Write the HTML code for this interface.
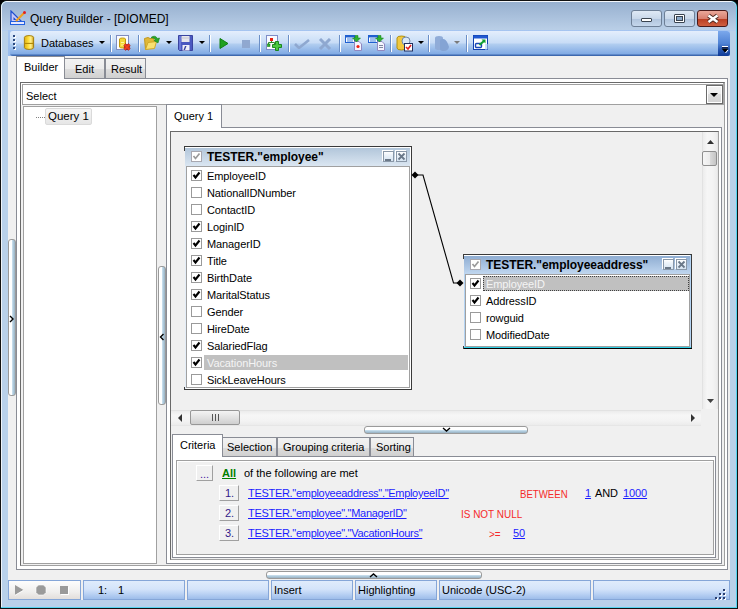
<!DOCTYPE html>
<html><head><meta charset="utf-8">
<style>
*{margin:0;padding:0;box-sizing:border-box}
html,body{width:738px;height:609px;overflow:hidden;background:#000}
body{position:relative;font-family:"Liberation Sans",sans-serif;font-size:11px;color:#000}
.a{position:absolute}
.t{position:absolute;white-space:nowrap;line-height:1}
.sep{position:absolute;top:35px;width:2px;height:17px;border-left:1px solid #6b8fc7;border-right:1px solid #fff}
.dd{position:absolute;top:42px;width:0;height:0;border-left:3px solid transparent;border-right:3px solid transparent;border-top:3px solid #000}
.cb{position:absolute;width:11px;height:11px;border:1px solid #9a9a9a;background:#fff}
.cb svg{position:absolute;left:0;top:0}
.fl{position:absolute;white-space:nowrap;line-height:1;font-size:11px;letter-spacing:-0.1px}
.lk{color:#1c1cff;text-decoration:underline}
.rd{color:#f52a2a}
.btn{position:absolute;border:1px solid #a0a0a0;background:linear-gradient(#f6f6f6,#e2e2e2);border-radius:2px}
</style></head><body>
<!-- window frame -->
<div class="a" style="left:0;top:0;width:738px;height:609px;background:#111;border-radius:7px 7px 0 0"></div>
<div class="a" style="left:1px;top:1px;width:736px;height:607px;background:#56d4f0;border-radius:6px 6px 0 0"></div>
<div class="a" style="left:1px;top:1px;width:735px;height:606px;background:#b9d1ea;border-radius:6px 6px 0 0;border-top:1px solid #f4f7fb;border-left:1px solid #eef3f8"></div>
<div class="a" style="left:2px;top:2px;width:734px;height:29px;background:linear-gradient(#97b0cf,#bbd0e8);border-radius:5px 5px 0 0"></div>
<div class="a" style="left:2px;top:30px;width:734px;height:1px;background:#b3cdef"></div>
<!-- title -->
<svg class="a" style="left:10px;top:10px" width="18" height="16" viewBox="0 0 18 16">
<path d="M1 1 L1 12 L12 12 Z" fill="#c8c8f8" stroke="#2050d0" stroke-width="1.2"/>
<path d="M3.5 7 L3.5 10 L6.5 10 Z" fill="#2050d0"/>
<rect x="0.5" y="11.5" width="14" height="3" fill="#e8e8ff" stroke="#2060e0"/>
<path d="M6 11 L14 3" stroke="#f0a020" stroke-width="2.2"/>
<circle cx="14.5" cy="2.5" r="1.5" fill="#e02020"/>
</svg>
<div class="t" style="left:30px;top:13px;font-size:12px;color:#000">Query Builder - [DIOMED]</div>
<!-- caption buttons -->
<div class="a" style="left:631px;top:10px;width:31px;height:17px;border:1px solid #6d7f96;border-radius:3px;background:linear-gradient(#dfe9f5 0,#c9d8ea 50%,#afc3dc 51%,#c5d7ec 100%)"></div>
<div class="a" style="left:641px;top:18px;width:11px;height:4px;border:1px solid #3a4450;background:#fff;border-radius:1px"></div>
<div class="a" style="left:664px;top:10px;width:31px;height:17px;border:1px solid #6d7f96;border-radius:3px;background:linear-gradient(#dfe9f5 0,#c9d8ea 50%,#afc3dc 51%,#c5d7ec 100%)"></div>
<div class="a" style="left:674px;top:14px;width:11px;height:9px;border:1px solid #3a4450;background:#fff;border-radius:1px"></div>
<div class="a" style="left:676px;top:16px;width:7px;height:5px;border:1px solid #3a4450;background:#8aa8c8"></div>
<div class="a" style="left:697px;top:10px;width:31px;height:17px;border:1px solid #4a1a1a;border-radius:3px;background:linear-gradient(#eaa89a 0,#d88070 50%,#b83c20 51%,#d06040 100%)"></div>
<svg class="a" style="left:705px;top:12px" width="16" height="13" viewBox="0 0 16 13"><path d="M3.5 3.5 L12.5 10 M12.5 3.5 L3.5 10" stroke="#4a2820" stroke-width="4.4"/><path d="M3.5 3.5 L12.5 10 M12.5 3.5 L3.5 10" stroke="#fff" stroke-width="2.6"/></svg>
<!-- content bg -->
<div class="a" style="left:8px;top:56px;width:722px;height:544px;background:#f0f0f0"></div>
<!-- toolbar -->
<div class="a" style="left:8px;top:30px;width:722px;height:26px;background:linear-gradient(#a6c5f0,#98bbec)"></div>
<div class="a" style="left:10px;top:31px;width:720px;height:25px;border-radius:3px;background:linear-gradient(#e4eefc 0px,#d3e4f9 7px,#c8dcf6 12px,#b2cef0 13px,#80aae4 23px,#3d68ae 24px)"></div>
<div class="a" style="left:718px;top:31px;width:12px;height:25px;border-radius:0 3px 3px 0;background:linear-gradient(#7ba8ec,#4f82d4 50%,#2656b0 75%,#0e3a96)"></div>
<div class="a" style="left:722px;top:46px;width:6px;height:1px;background:#fff;box-shadow:0 1px 0 #102050"></div>
<svg class="a" style="left:721px;top:48px" width="8" height="6" viewBox="0 0 8 6"><path d="M0.5 0.5 L7.5 0.5 L4 4.5 Z" fill="#000"/><path d="M7 2 L4.5 5" stroke="#fff" stroke-width="1"/></svg>
<!-- grip -->
<div class="a" style="left:13px;top:35px;width:2px;height:2px;background:#2c4a80;box-shadow:1px 1px 0 #fff,0 4px 0 #2c4a80,1px 5px 0 #fff,0 8px 0 #2c4a80,1px 9px 0 #fff,0 12px 0 #2c4a80,1px 13px 0 #fff"></div>
<!-- db icon -->
<svg class="a" style="left:23px;top:34px" width="12" height="17" viewBox="-0.5 0 13 17">
<defs><linearGradient id="gy" x1="0" x2="1"><stop offset="0" stop-color="#e0b010"/><stop offset=".45" stop-color="#ffe040"/><stop offset=".7" stop-color="#fff090"/><stop offset="1" stop-color="#d0a010"/></linearGradient></defs>
<path d="M1 3 Q1 1 6 1 Q11 1 11 3 L11 14 Q11 16 6 16 Q1 16 1 14 Z" fill="url(#gy)" stroke="#a07808"/>
<path d="M1.5 9.5 L10.5 9.5" stroke="#b08808" stroke-width="1.2" fill="none"/>
</svg>
<div class="t" style="left:41px;top:38px;font-size:11px">Databases</div>
<div class="dd" style="left:99px;top:41px"></div>
<div class="sep" style="left:110px"></div>
<!-- icon db del -->
<svg class="a" style="left:115px;top:34px" width="17" height="17" viewBox="0 0 17 17">
<rect x="1.5" y="1.5" width="12" height="14" fill="#fbfcff" stroke="#7f8cc0"/>
<path d="M4.5 5 Q4.5 4 7.5 4 Q10.5 4 10.5 5 L10.5 13 Q10.5 14 7.5 14 Q4.5 14 4.5 13 Z" fill="#f4d838" stroke="#c09a10"/>
<path d="M6 8.5 L9 8.5 M6 11 L9 11" stroke="#fff6a0"/>
<path d="M9.5 10.5 L14.5 15.5 M14.5 10.5 L9.5 15.5" stroke="#a01010" stroke-width="3.2"/>
<path d="M9.5 10.5 L14.5 15.5 M14.5 10.5 L9.5 15.5" stroke="#f04020" stroke-width="1.8"/>
</svg>
<div class="sep" style="left:138px"></div>
<!-- folder -->
<svg class="a" style="left:144px;top:35px" width="17" height="16" viewBox="0 0 17 16">
<path d="M0.5 3.5 L4 2.5 L6 3.5 L10 3.5 L10 12 L1.5 14.5 Z" fill="#e0b838" stroke="#c09820"/>
<path d="M1.5 14.5 L4 7.5 L12.5 6.5 L10.5 13.5 Z" fill="#f8e070" stroke="#d0a828"/>
<path d="M7 2.5 Q11 -0.5 13.5 3.5 L15.5 3 L14 8 L10 5.5 L12 5 Q10 2.5 7 2.5 Z" fill="#28a828" stroke="#188018" stroke-width=".6"/>
</svg>
<div class="dd" style="left:166px;top:41px"></div>
<!-- save -->
<svg class="a" style="left:178px;top:35px" width="15" height="16" viewBox="0 0 15 16">
<path d="M0.5 0.5 L14.5 0.5 L14.5 15.5 L1.5 15.5 L0.5 14.5 Z" fill="#4a58c0" stroke="#3a44a0"/>
<rect x="1" y="1" width="2" height="14" fill="#6a78d8"/>
<rect x="3.5" y="1" width="8" height="6" fill="#e6e6ec"/>
<rect x="3.5" y="2.5" width="8" height="1" fill="#c4c4d0"/>
<rect x="4.5" y="10" width="7" height="5.5" fill="#f0f0f8"/>
<path d="M5.5 15 L7 11 L8.5 11 L7 15 Z" fill="#3a44a0"/>
</svg>
<div class="dd" style="left:199px;top:41px"></div>
<div class="sep" style="left:209px"></div>
<!-- play stop -->
<svg class="a" style="left:219px;top:38px" width="10" height="11" viewBox="0 0 10 11"><path d="M1 0.5 L9 5.5 L1 10.5 Z" fill="#20a020" stroke="#108010"/></svg>
<div class="a" style="left:242px;top:40px;width:8px;height:8px;background:#90a8d0"></div>
<div class="sep" style="left:259px"></div>
<!-- add table -->
<svg class="a" style="left:265px;top:34px" width="18" height="18" viewBox="0 0 18 18">
<rect x="1.5" y="1.5" width="11" height="14" fill="#f8faff" stroke="#7e8cc8"/>
<rect x="5" y="4" width="3" height="3" fill="#e82010"/>
<path d="M6.5 7 L6.5 8.5 M3.5 8.5 L9.5 8.5 M3.5 8.5 L3.5 10 M9.5 8.5 L9.5 10" stroke="#188018" stroke-width=".9"/>
<rect x="2.5" y="10" width="2.5" height="2.5" fill="#30b030" stroke="#188018" stroke-width=".6"/>
<path transform="translate(1 0)" d="M9.5 7.5 L12.5 7.5 L12.5 10.5 L15.5 10.5 L15.5 13.5 L12.5 13.5 L12.5 16.5 L9.5 16.5 L9.5 13.5 L6.5 13.5 L6.5 10.5 L9.5 10.5 Z" fill="#4cc840" stroke="#108010" stroke-width=".9"/>
</svg>
<div class="sep" style="left:288px"></div>
<svg class="a" style="left:294px;top:39px" width="16" height="10" viewBox="0 0 16 10"><path d="M1 5 L5 9 L15 1" stroke="#8fa8d0" stroke-width="2.6" fill="none"/></svg>
<svg class="a" style="left:318px;top:38px" width="14" height="12" viewBox="0 0 14 12"><path d="M2 1 L12 11 M12 1 L2 11" stroke="#8fa8d0" stroke-width="3"/></svg>
<div class="sep" style="left:339px"></div>
<svg class="a" style="left:344px;top:34px" width="18" height="17" viewBox="0 0 18 17">
<rect x="1.5" y="1.5" width="9" height="7" fill="#fff" stroke="#2060d0"/>
<rect x="1.5" y="1.5" width="9" height="2" fill="#2060d0"/><rect x="3" y="4.5" width="6" height="1" fill="#4080e0"/><rect x="3" y="6.5" width="6" height="1" fill="#4080e0"/>
<path d="M10.5 7.5 L10.5 16.5 L17.5 16.5 L17.5 10 L15 7.5 Z" fill="#f4f4ff" stroke="#9088c0"/>
<path d="M11 1.5 L14 1.5 L14 4 L16.5 4 L12.5 8 L8.5 4 L11 4 Z" fill="#30b030" stroke="#108010" stroke-width=".5"/>
<circle cx="14" cy="12.5" r="1.6" fill="#f02010"/>
</svg>
<svg class="a" style="left:367px;top:34px" width="18" height="17" viewBox="0 0 18 17">
<rect x="1.5" y="1.5" width="9" height="7" fill="#fff" stroke="#2060d0"/>
<rect x="1.5" y="1.5" width="9" height="2" fill="#2060d0"/><rect x="3" y="4.5" width="6" height="1" fill="#4080e0"/><rect x="3" y="6.5" width="6" height="1" fill="#4080e0"/>
<path d="M10.5 7.5 L10.5 16.5 L17.5 16.5 L17.5 10 L15 7.5 Z" fill="#f4f4ff" stroke="#9088c0"/>
<path d="M11 1.5 L14 1.5 L14 4 L16.5 4 L12.5 8 L8.5 4 L11 4 Z" fill="#30b030" stroke="#108010" stroke-width=".5"/>
<path d="M12 11.5 L16 11.5 M12 13.5 L16 13.5" stroke="#8088a0"/>
</svg>
<div class="sep" style="left:390px"></div>
<svg class="a" style="left:396px;top:35px" width="18" height="17" viewBox="0 0 18 17">
<path d="M1 3 Q1 1 5.5 1 Q10 1 10 3 L10 13 Q10 15 5.5 15 Q1 15 1 13 Z" fill="#f0c840" stroke="#b09010"/>
<circle cx="10" cy="6" r="4" fill="#d8e8f8" stroke="#7088a8"/>
<rect x="8.5" y="8.5" width="8" height="7.5" fill="#fff" stroke="#203060"/>
<path d="M10 12 L12 14 L15 10" stroke="#e02020" stroke-width="1.6" fill="none"/>
</svg>
<div class="dd" style="left:418px;top:41px"></div>
<div class="sep" style="left:428px"></div>
<svg class="a" style="left:433px;top:35px" width="18" height="16" viewBox="0 0 18 16">
<path d="M2 3 Q2 1 6 1 Q10 1 10 3 L10 13 Q10 15 6 15 Q2 15 2 13 Z" fill="#90acd8"/>
<path d="M7 6 Q7 4 10 4 Q13 4 15 9 L16 12 Q15 16 11 16 Q7 16 7 14 Z" fill="#84a4d4"/>
</svg>
<div class="dd" style="left:454px;top:41px;border-top-color:#7a7a7a"></div>
<div class="sep" style="left:466px"></div>
<svg class="a" style="left:473px;top:35px" width="16" height="15" viewBox="0 0 16 15">
<rect x="0.5" y="0.5" width="14" height="14" fill="#fff" stroke="#1040b0"/>
<rect x="0.5" y="0.5" width="14" height="3" fill="#2058d0"/>
<rect x="12" y="9" width="2.5" height="5.5" fill="#c8e4f8"/>
<rect x="2.5" y="8.5" width="6" height="4" rx="1" fill="none" stroke="#1848b8" stroke-width="1.4"/>
<path d="M6.5 10 L11.5 5.5" stroke="#10a030" stroke-width="2" fill="none"/><path d="M8.5 4.5 L12.5 4.5 L12.5 8.5 Z" fill="#10a030"/>
</svg>


<!-- ===== tabs ===== -->
<div class="a" style="left:16px;top:56px;width:49px;height:23px;background:#fff;border:1px solid #898c95;border-bottom:none"></div>
<div class="t" style="left:24px;top:62px">Builder</div>
<div class="a" style="left:64px;top:58px;width:41px;height:21px;background:linear-gradient(#f2f2f2 0,#ebebeb 50%,#dddddd 51%,#cfcfcf 100%);border:1px solid #898c95;border-bottom:none"></div>
<div class="t" style="left:75px;top:64px">Edit</div>
<div class="a" style="left:105px;top:58px;width:41px;height:21px;background:linear-gradient(#f2f2f2 0,#ebebeb 50%,#dddddd 51%,#cfcfcf 100%);border:1px solid #898c95;border-bottom:none"></div>
<div class="t" style="left:111px;top:64px">Result</div>
<!-- builder page -->
<div class="a" style="left:16px;top:78px;width:712px;height:492px;background:#fff;border:1px solid #898c95"></div>
<div class="a" style="left:17px;top:78px;width:47px;height:1px;background:#fff"></div>
<!-- inner panel -->
<div class="a" style="left:20px;top:82px;width:705px;height:484px;background:#f0f0f0;border-left:1px solid #696969;border-top:1px solid #696969;border-right:1px solid #a0a0a0;border-bottom:1px solid #a0a0a0"></div>

<!-- combobox -->
<div class="a" style="left:21px;top:83px;width:703px;height:22px;background:#fff"></div>
<div class="a" style="left:22px;top:84px;width:702px;height:21px;background:#fff;border:1px solid #a0a0a0;border-right:none"></div>
<div class="t" style="left:26px;top:91px">Select</div>
<div class="a" style="left:706px;top:85px;width:17px;height:19px;border:1px solid #6a6a6a;box-shadow:inset 1px 1px 0 #fff,inset -1px -1px 0 #fff;background:linear-gradient(#f3f3f3 0,#ececec 45%,#dcdcdc 50%,#d2d2d2 100%)"></div>
<div class="a" style="left:723px;top:83px;width:1px;height:22px;background:#a8a8a8"></div>
<div class="a" style="left:710px;top:93px;width:0;height:0;border-left:4px solid transparent;border-right:4px solid transparent;border-top:4px solid #000"></div>
<!-- tree panel -->
<div class="a" style="left:23px;top:106px;width:134px;height:458px;background:#fff;border:1px solid #a0a0a0"></div>
<div class="a" style="left:36px;top:117px;width:9px;height:1px;background:repeating-linear-gradient(90deg,#808080 0 1px,transparent 1px 2px)"></div>
<div class="a" style="left:45px;top:108px;width:47px;height:17px;border:1px solid #dadada;border-radius:2px;background:linear-gradient(#f6f6f6,#e6e6e6)"></div>
<div class="t" style="left:48px;top:111px;font-size:11.5px">Query 1</div>
<!-- left splitter -->
<div class="a" style="left:8px;top:239px;width:8px;height:157px;border:1px solid #9a9a9a;border-radius:3px;background:linear-gradient(90deg,#fff 0,#fff 45%,#cfe4f2 50%,#a8c4d6 80%,#9ab0c0 100%)"></div>
<svg class="a" style="left:9px;top:315px" width="6" height="8" viewBox="0 0 6 8"><path d="M1 1 L4 4 L1 7" stroke="#000" stroke-width="1.4" fill="none"/></svg>
<!-- middle splitter -->
<div class="a" style="left:158px;top:266px;width:8px;height:139px;border:1px solid #9a9a9a;border-radius:3px;background:linear-gradient(90deg,#fff 0,#fff 45%,#cfe4f2 50%,#a8c4d6 80%,#9ab0c0 100%)"></div>
<svg class="a" style="left:159px;top:333px" width="6" height="8" viewBox="0 0 6 8"><path d="M4.5 1 L1.5 4 L4.5 7" stroke="#000" stroke-width="1.4" fill="none"/></svg>
<!-- query1 tab -->
<div class="a" style="left:166px;top:104px;width:56px;height:24px;background:#fff;border:1px solid #898c95;border-bottom:none"></div>
<div class="t" style="left:174px;top:111px">Query 1</div>
<div class="a" style="left:166px;top:127px;width:556px;height:437px;background:#fff;border:1px solid #898c95"></div>
<div class="a" style="left:167px;top:127px;width:54px;height:1px;background:#fff"></div>
<!-- canvas frame -->
<div class="a" style="left:170px;top:131px;width:549px;height:429px;background:#f0f0f0;border-left:1px solid #696969;border-top:1px solid #696969;border-right:1px solid #a0a0a0;border-bottom:1px solid #a0a0a0"></div>
<!-- diagram canvas -->
<div class="a" style="left:171px;top:132px;width:547px;height:294px;background:#f0f0f0"></div>
<!-- v scrollbar -->
<div class="a" style="left:702px;top:132px;width:16px;height:277px;background:linear-gradient(90deg,#ececec,#f6f6f6 30%,#f3f3f3 70%,#ececec);border-left:1px solid #e2e2e2;border-right:1px solid #e6e6e6"></div>
<svg class="a" style="left:706px;top:139px" width="9" height="6" viewBox="0 0 9 6"><path d="M1 5 L4.5 1 L8 5 Z" fill="#303030"/></svg>
<div class="a" style="left:702px;top:151px;width:15px;height:15px;border:1px solid #8f8f8f;border-radius:2px;background:linear-gradient(90deg,#f6f6f6,#ececec 50%,#dcdcdc 51%,#c4c4c4)"></div>
<svg class="a" style="left:706px;top:398px" width="9" height="6" viewBox="0 0 9 6"><path d="M1 1 L8 1 L4.5 5 Z" fill="#404040"/></svg>
<!-- h scrollbar -->
<div class="a" style="left:171px;top:410px;width:530px;height:16px;background:linear-gradient(#ececec,#f6f6f6 30%,#f3f3f3 70%,#ececec);border-top:1px solid #e2e2e2;border-bottom:1px solid #e6e6e6"></div>
<div class="a" style="left:178px;top:414px;width:0;height:0;border-top:4px solid transparent;border-bottom:4px solid transparent;border-right:4px solid #333"></div>
<div class="a" style="left:190px;top:410px;width:50px;height:15px;border:1px solid #979797;border-radius:2px;background:linear-gradient(#f4f4f4,#e2e2e2 50%,#cfcfcf)"></div>
<div class="a" style="left:212px;top:414px;width:1px;height:7px;background:#555;box-shadow:3px 0 0 #555,6px 0 0 #555"></div>
<div class="a" style="left:691px;top:414px;width:0;height:0;border-top:4px solid transparent;border-bottom:4px solid transparent;border-left:4px solid #333"></div>
<!-- h splitter -->
<div class="a" style="left:364px;top:426px;width:164px;height:8px;border:1px solid #9a9a9a;border-radius:3px;background:linear-gradient(#fff 0,#fff 45%,#cfe4f2 50%,#a8c4d6 80%,#9ab0c0 100%)"></div>
<svg class="a" style="left:442px;top:427px" width="9" height="6" viewBox="0 0 9 6"><path d="M1 1 L4.5 4 L8 1" stroke="#000" stroke-width="1.4" fill="none"/></svg>

<!--TABLES-->
<div class="a" style="left:185px;top:147px;width:226px;height:242px;background:#fff"></div>
<div class="a" style="left:185px;top:148px;width:225px;height:19px;background:linear-gradient(#b2c6da,#dde8f3)"></div>
<div class="a" style="left:186px;top:166px;width:224px;height:222px;border:1px solid #a0a0a0;background:#fff"></div>
<div class="a" style="left:184px;top:146px;width:228px;height:1px;background:#3a3a3a"></div>
<div class="a" style="left:411px;top:146px;width:1px;height:244px;background:#3a3a3a"></div>
<div class="a" style="left:184px;top:389px;width:228px;height:1px;background:#3a3a3a"></div>
<div class="a" style="left:184px;top:146px;width:1px;height:5px;background:#3a3a3a"></div>
<div class="a" style="left:184px;top:387px;width:1px;height:3px;background:#3a3a3a"></div>
<div class="a" style="left:185px;top:166px;width:1px;height:223px;background:#e4edf7"></div>
<div class="cb" style="left:191px;top:151px;border-color:#a8a8b0;background:#fff"><svg width="11" height="11" viewBox="0 0 11 11" style="position:absolute;left:-1px;top:-1px"><path d="M2.5 5 L4.5 7.5 L8.5 2.5" stroke="#9a9a9a" stroke-width="1.7" fill="none"/></svg></div>
<div class="t" style="left:207px;top:151px;font-weight:bold;font-size:12px;letter-spacing:-0.05px">TESTER."employee"</div>
<div class="a" style="left:383px;top:151px;width:11px;height:11px;border:1px solid #8a98a8;background:linear-gradient(#fff 0,#eef4fa 30%,#d6e4f2);box-shadow:-1px -1px 0 #fff"></div>
<div class="a" style="left:385px;top:159px;width:6px;height:2px;background:#6a7888"></div>
<div class="a" style="left:396px;top:151px;width:11px;height:11px;border:1px solid #8a98a8;background:linear-gradient(#fff 0,#eef4fa 30%,#d6e4f2);box-shadow:-1px -1px 0 #fff"></div>
<svg class="a" style="left:397px;top:152px" width="9" height="9" viewBox="0 0 9 9"><path d="M1.5 1.5 L7.5 7.5 M7.5 1.5 L1.5 7.5" stroke="#6a7888" stroke-width="1.8"/></svg>
<div class="cb" style="left:191px;top:170px"><svg width="11" height="11" viewBox="0 0 11 11" style="position:absolute;left:-1px;top:-1px"><path d="M2.5 5 L4.5 7.5 L8.5 2.5" stroke="#000" stroke-width="2.1" fill="none"/></svg></div>
<div class="fl" style="left:207px;top:171px;color:#000">EmployeeID</div>
<div class="cb" style="left:191px;top:187px"></div>
<div class="fl" style="left:207px;top:188px;color:#000">NationalIDNumber</div>
<div class="cb" style="left:191px;top:204px"></div>
<div class="fl" style="left:207px;top:205px;color:#000">ContactID</div>
<div class="cb" style="left:191px;top:221px"><svg width="11" height="11" viewBox="0 0 11 11" style="position:absolute;left:-1px;top:-1px"><path d="M2.5 5 L4.5 7.5 L8.5 2.5" stroke="#000" stroke-width="2.1" fill="none"/></svg></div>
<div class="fl" style="left:207px;top:222px;color:#000">LoginID</div>
<div class="cb" style="left:191px;top:238px"><svg width="11" height="11" viewBox="0 0 11 11" style="position:absolute;left:-1px;top:-1px"><path d="M2.5 5 L4.5 7.5 L8.5 2.5" stroke="#000" stroke-width="2.1" fill="none"/></svg></div>
<div class="fl" style="left:207px;top:239px;color:#000">ManagerID</div>
<div class="cb" style="left:191px;top:255px"><svg width="11" height="11" viewBox="0 0 11 11" style="position:absolute;left:-1px;top:-1px"><path d="M2.5 5 L4.5 7.5 L8.5 2.5" stroke="#000" stroke-width="2.1" fill="none"/></svg></div>
<div class="fl" style="left:207px;top:256px;color:#000">Title</div>
<div class="cb" style="left:191px;top:272px"><svg width="11" height="11" viewBox="0 0 11 11" style="position:absolute;left:-1px;top:-1px"><path d="M2.5 5 L4.5 7.5 L8.5 2.5" stroke="#000" stroke-width="2.1" fill="none"/></svg></div>
<div class="fl" style="left:207px;top:273px;color:#000">BirthDate</div>
<div class="cb" style="left:191px;top:289px"><svg width="11" height="11" viewBox="0 0 11 11" style="position:absolute;left:-1px;top:-1px"><path d="M2.5 5 L4.5 7.5 L8.5 2.5" stroke="#000" stroke-width="2.1" fill="none"/></svg></div>
<div class="fl" style="left:207px;top:290px;color:#000">MaritalStatus</div>
<div class="cb" style="left:191px;top:306px"></div>
<div class="fl" style="left:207px;top:307px;color:#000">Gender</div>
<div class="cb" style="left:191px;top:323px"></div>
<div class="fl" style="left:207px;top:324px;color:#000">HireDate</div>
<div class="cb" style="left:191px;top:340px"><svg width="11" height="11" viewBox="0 0 11 11" style="position:absolute;left:-1px;top:-1px"><path d="M2.5 5 L4.5 7.5 L8.5 2.5" stroke="#000" stroke-width="2.1" fill="none"/></svg></div>
<div class="fl" style="left:207px;top:341px;color:#000">SalariedFlag</div>
<div class="a" style="left:204px;top:355px;width:204px;height:15px;background:#c0c0c0"></div>
<div class="cb" style="left:191px;top:357px"><svg width="11" height="11" viewBox="0 0 11 11" style="position:absolute;left:-1px;top:-1px"><path d="M2.5 5 L4.5 7.5 L8.5 2.5" stroke="#000" stroke-width="2.1" fill="none"/></svg></div>
<div class="fl" style="left:207px;top:358px;color:#f4f4f4">VacationHours</div>
<div class="cb" style="left:191px;top:374px"></div>
<div class="fl" style="left:207px;top:375px;color:#000">SickLeaveHours</div>
<div class="a" style="left:464px;top:255px;width:227px;height:93px;background:#fff"></div>
<div class="a" style="left:464px;top:256px;width:226px;height:19px;background:linear-gradient(#8fadd2,#c3d9f1)"></div>
<div class="a" style="left:465px;top:274px;width:225px;height:73px;border:1px solid #a0a0a0;background:#fff"></div>
<div class="a" style="left:463px;top:254px;width:229px;height:1px;background:#3a3a3a"></div>
<div class="a" style="left:691px;top:254px;width:1px;height:95px;background:#3a3a3a"></div>
<div class="a" style="left:463px;top:348px;width:229px;height:1px;background:#000"></div>
<div class="a" style="left:463px;top:254px;width:1px;height:5px;background:#3a3a3a"></div>
<div class="a" style="left:463px;top:346px;width:1px;height:3px;background:#3a3a3a"></div>
<div class="a" style="left:464px;top:274px;width:1px;height:74px;background:#b4d4f4"></div>
<div class="a" style="left:690px;top:255px;width:1px;height:93px;background:#b4d4f4"></div>
<div class="a" style="left:464px;top:347px;width:227px;height:1px;background:#2ccfe6"></div>
<div class="cb" style="left:470px;top:259px;border-color:#a8a8b0;background:#fff"><svg width="11" height="11" viewBox="0 0 11 11" style="position:absolute;left:-1px;top:-1px"><path d="M2.5 5 L4.5 7.5 L8.5 2.5" stroke="#9a9a9a" stroke-width="1.7" fill="none"/></svg></div>
<div class="t" style="left:486px;top:259px;font-weight:bold;font-size:12px;letter-spacing:-0.05px">TESTER."employeeaddress"</div>
<div class="a" style="left:663px;top:259px;width:11px;height:11px;border:1px solid #8a98a8;background:linear-gradient(#fff 0,#eef4fa 30%,#d6e4f2);box-shadow:-1px -1px 0 #fff"></div>
<div class="a" style="left:665px;top:267px;width:6px;height:2px;background:#6a7888"></div>
<div class="a" style="left:676px;top:259px;width:11px;height:11px;border:1px solid #8a98a8;background:linear-gradient(#fff 0,#eef4fa 30%,#d6e4f2);box-shadow:-1px -1px 0 #fff"></div>
<svg class="a" style="left:677px;top:260px" width="9" height="9" viewBox="0 0 9 9"><path d="M1.5 1.5 L7.5 7.5 M7.5 1.5 L1.5 7.5" stroke="#6a7888" stroke-width="1.8"/></svg>
<div class="a" style="left:483px;top:276px;width:206px;height:15px;background:#c0c0c0;border:1px dotted #404040"></div>
<div class="cb" style="left:470px;top:278px"><svg width="11" height="11" viewBox="0 0 11 11" style="position:absolute;left:-1px;top:-1px"><path d="M2.5 5 L4.5 7.5 L8.5 2.5" stroke="#000" stroke-width="2.1" fill="none"/></svg></div>
<div class="fl" style="left:486px;top:279px;color:#f4f4f4">EmployeeID</div>
<div class="cb" style="left:470px;top:295px"><svg width="11" height="11" viewBox="0 0 11 11" style="position:absolute;left:-1px;top:-1px"><path d="M2.5 5 L4.5 7.5 L8.5 2.5" stroke="#000" stroke-width="2.1" fill="none"/></svg></div>
<div class="fl" style="left:486px;top:296px;color:#000">AddressID</div>
<div class="cb" style="left:470px;top:312px"></div>
<div class="fl" style="left:486px;top:313px;color:#000">rowguid</div>
<div class="cb" style="left:470px;top:329px"></div>
<div class="fl" style="left:486px;top:330px;color:#000">ModifiedDate</div>
<svg class="a" style="left:405px;top:165px" width="65" height="130" viewBox="405 165 65 130">
<path d="M415 175 L423 175 L453.5 283 L460 283" stroke="#000" stroke-width="1.1" fill="none"/>
<path d="M411.5 175 L415 171.5 L418.5 175 L415 178.5 Z" fill="#000"/>
<path d="M456.5 283 L460 279.5 L463.5 283 L460 286.5 Z" fill="#000"/>
</svg>
<!--/TABLES-->
<!-- criteria tabs -->
<div class="a" style="left:172px;top:434px;width:51px;height:23px;background:#fff;border:1px solid #898c95;border-bottom:none"></div>
<div class="t" style="left:180px;top:440px">Criteria</div>
<div class="a" style="left:222px;top:437px;width:55px;height:20px;background:linear-gradient(#f2f2f2 0,#ebebeb 50%,#dddddd 51%,#cfcfcf 100%);border:1px solid #898c95;border-bottom:none"></div>
<div class="t" style="left:227px;top:442px">Selection</div>
<div class="a" style="left:277px;top:437px;width:93px;height:20px;background:linear-gradient(#f2f2f2 0,#ebebeb 50%,#dddddd 51%,#cfcfcf 100%);border:1px solid #898c95;border-bottom:none"></div>
<div class="t" style="left:283px;top:442px">Grouping criteria</div>
<div class="a" style="left:370px;top:437px;width:44px;height:20px;background:linear-gradient(#f2f2f2 0,#ebebeb 50%,#dddddd 51%,#cfcfcf 100%);border:1px solid #898c95;border-bottom:none"></div>
<div class="t" style="left:376px;top:442px">Sorting</div>
<div class="a" style="left:172px;top:456px;width:544px;height:102px;background:#fff;border:1px solid #898c95"></div>
<div class="a" style="left:173px;top:456px;width:49px;height:1px;background:#fff"></div>
<div class="a" style="left:176px;top:460px;width:538px;height:95px;background:#f0f0f0;border-left:1px solid #a0a0a0;border-top:1px solid #a0a0a0;border-right:1px solid #a0a0a0;border-bottom:1px solid #a0a0a0"></div>
<div class="a" style="left:177px;top:461px;width:536px;height:93px;border-left:1px solid #fff;border-top:1px solid #fff"></div>
<div class="a" style="left:196px;top:465px;width:17px;height:16px;background:#f0f0f0;border-left:1px solid #fff;border-top:1px solid #fff;border-right:1px solid #a0a0a0;border-bottom:1px solid #a0a0a0"></div>
<div class="t" style="left:200px;top:469px;color:#4a20a0">...</div>
<div class="t" style="left:222px;top:468px;color:#008000;font-weight:bold;text-decoration:underline">All</div>
<div class="fl" style="left:244px;top:468px;letter-spacing:0">of the following are met</div>
<div class="a" style="left:219px;top:485px;width:20px;height:16px;background:#f0f0f0;border-left:1px solid #fff;border-top:1px solid #fff;border-right:1px solid #a0a0a0;border-bottom:1px solid #a0a0a0"></div>
<div class="fl" style="left:225px;top:488px;color:#30188a">1.</div>
<div class="fl lk" style="left:248px;top:488px;letter-spacing:-0.3px">TESTER."employeeaddress"."EmployeeID"</div>
<div class="a" style="left:219px;top:505px;width:20px;height:16px;background:#f0f0f0;border-left:1px solid #fff;border-top:1px solid #fff;border-right:1px solid #a0a0a0;border-bottom:1px solid #a0a0a0"></div>
<div class="fl" style="left:225px;top:508px;color:#30188a">2.</div>
<div class="fl lk" style="left:248px;top:508px;letter-spacing:-0.3px">TESTER."employee"."ManagerID"</div>
<div class="a" style="left:219px;top:525px;width:20px;height:16px;background:#f0f0f0;border-left:1px solid #fff;border-top:1px solid #fff;border-right:1px solid #a0a0a0;border-bottom:1px solid #a0a0a0"></div>
<div class="fl" style="left:225px;top:528px;color:#30188a">3.</div>
<div class="fl lk" style="left:248px;top:528px;letter-spacing:-0.3px">TESTER."employee"."VacationHours"</div>
<div class="fl rd" style="left:520px;top:489px;letter-spacing:0;transform:scaleX(.875);transform-origin:0 0">BETWEEN</div>
<div class="fl lk" style="left:585px;top:488px">1</div>
<div class="fl" style="left:595px;top:488px">AND</div>
<div class="fl lk" style="left:623px;top:488px">1000</div>
<div class="fl rd" style="left:461px;top:509px;letter-spacing:0;transform:scaleX(.905);transform-origin:0 0">IS NOT NULL</div>
<div class="fl rd" style="left:489px;top:529px;letter-spacing:0;transform:scaleX(.9);transform-origin:0 0">&gt;=</div>
<div class="fl lk" style="left:513px;top:528px">50</div>

<!-- bottom splitter -->
<div class="a" style="left:266px;top:571px;width:216px;height:8px;border:1px solid #9a9a9a;border-radius:3px;background:linear-gradient(#fff 0,#fff 45%,#cfe4f2 50%,#a8c4d6 80%,#9ab0c0 100%)"></div>
<svg class="a" style="left:369px;top:572px" width="9" height="6" viewBox="0 0 9 6"><path d="M1 5 L4.5 2 L8 5" stroke="#000" stroke-width="1.4" fill="none"/></svg>

<!-- status bar -->
<div class="a" style="left:8px;top:580px;width:73px;height:20px;border:1px solid #85a6d8;background:linear-gradient(#fdfdfd,#f0efee 60%,#e2dedb)"></div>
<div class="a" style="left:83px;top:580px;width:102px;height:20px;border:1px solid #85a6d8;background:linear-gradient(#e0ecfc 0,#d4e4fa 45%,#bcd3f4 70%,#9dbdea 100%)"></div>
<div class="a" style="left:187px;top:580px;width:82px;height:20px;border:1px solid #85a6d8;background:linear-gradient(#e0ecfc 0,#d4e4fa 45%,#bcd3f4 70%,#9dbdea 100%)"></div>
<div class="a" style="left:271px;top:580px;width:82px;height:20px;border:1px solid #85a6d8;background:linear-gradient(#e0ecfc 0,#d4e4fa 45%,#bcd3f4 70%,#9dbdea 100%)"></div>
<div class="a" style="left:355px;top:580px;width:82px;height:20px;border:1px solid #85a6d8;background:linear-gradient(#e0ecfc 0,#d4e4fa 45%,#bcd3f4 70%,#9dbdea 100%)"></div>
<div class="a" style="left:439px;top:580px;width:152px;height:20px;border:1px solid #85a6d8;background:linear-gradient(#e0ecfc 0,#d4e4fa 45%,#bcd3f4 70%,#9dbdea 100%)"></div>
<div class="a" style="left:593px;top:580px;width:137px;height:20px;border:1px solid #85a6d8;background:linear-gradient(#e0ecfc 0,#d4e4fa 45%,#bcd3f4 70%,#9dbdea 100%)"></div>
<svg class="a" style="left:14px;top:584px" width="11" height="13" viewBox="0 0 11 13"><path d="M1 1 L9.5 6 L1 11 Z" fill="#9a9a9a"/><path d="M9.5 6.3 L1 11.3" stroke="#fff" stroke-width=".8"/></svg>
<svg class="a" style="left:35px;top:584px" width="12" height="12" viewBox="0 0 12 12"><path d="M3.5 1 L8.5 1 L11 3.5 L11 8.5 L8.5 11 L3.5 11 L1 8.5 L1 3.5 Z" fill="#9a9a9a" stroke="#fff" stroke-width=".6"/></svg>
<div class="a" style="left:60px;top:586px;width:8px;height:8px;background:#9a9a9a;box-shadow:1px 1px 0 #fff"></div>
<div class="t" style="left:98px;top:585px">1:</div>
<div class="t" style="left:118px;top:585px">1</div>
<div class="t" style="left:274px;top:585px">Insert</div>
<div class="t" style="left:358px;top:585px">Highlighting</div>
<div class="t" style="left:442px;top:585px">Unicode (USC-2)</div>
<div class="a" style="left:723px;top:589px;width:2px;height:2px;background:#2a3f70;box-shadow:1px 1px 0 #fff,0 4px 0 #2a3f70,1px 5px 0 #fff,-4px 4px 0 #2a3f70,-3px 5px 0 #fff,0 8px 0 #2a3f70,1px 9px 0 #fff,-4px 8px 0 #2a3f70,-3px 9px 0 #fff,-8px 8px 0 #2a3f70,-7px 9px 0 #fff"></div>
</body></html>
